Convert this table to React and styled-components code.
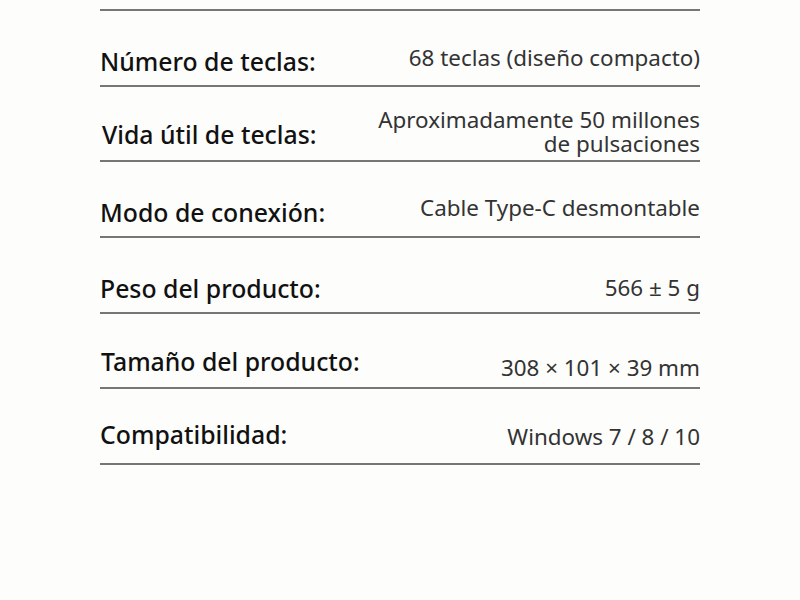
import React from "react";
import styled, { createGlobalStyle } from "styled-components";

const GlobalStyle = createGlobalStyle`
  html, body {
    margin: 0;
    padding: 0;
    background: #fdfdfc;
  }
  body {
    font-family: "Noto Sans", "Open Sans", sans-serif;
  }
`;

// lift: nudges the text up (px) so each row sits like the original sheet
const specs = [
  { label: "Número de teclas:", value: ["68 teclas (diseño compacto)"], labelLift: 0, lift: 3 },
  {
    label: "Vida útil de teclas:",
    value: ["Aproximadamente 50 millones", "de pulsaciones"],
    indent: 2,
    labelLift: 2,
    lift: -8,
  },
  { label: "Modo de conexión:", value: ["Cable Type-C desmontable"], labelLift: 0, lift: 4 },
  { label: "Peso del producto:", value: ["566 ± 5 g"], labelLift: 0, lift: 0 },
  { label: "Tamaño del producto:", value: ["308 × 101 × 39 mm"], indent: 1, labelLift: 2, lift: -5 },
  { label: "Compatibilidad:", value: ["Windows 7 / 8 / 10"], labelLift: 5, lift: 2 },
];

const SpecTable = () => {
  return (
    <Page>
      <GlobalStyle />
      <Table>
        {specs.map((row) => (
          <Row key={row.label}>
            <Label $indent={row.indent || 0} $lift={row.labelLift}>
              {row.label}
            </Label>
            <Value $lift={row.lift}>
              {row.value.map((line) => (
                <span key={line}>{line}</span>
              ))}
            </Value>
          </Row>
        ))}
      </Table>
    </Page>
  );
};

const Page = styled.div`
  width: 800px;
  height: 600px;
  padding-top: 9px;
  box-sizing: border-box;
  background: #fdfdfc;
`;

const Table = styled.div`
  width: 600px;
  margin: 0 auto;
  border-top: 2px solid #767676;
`;

const Row = styled.div`
  height: 73.7px;
  display: flex;
  justify-content: space-between;
  align-items: flex-end;
  border-bottom: 2px solid #767676;
`;

const Label = styled.div`
  padding-left: ${(p) => p.$indent}px;
  padding-bottom: ${(p) => 8 + p.$lift}px;
  font-size: 24.8px;
  font-weight: 500;
  line-height: 31px;
  color: #111;
  white-space: nowrap;
`;

const Value = styled.div`
  display: flex;
  flex-direction: column;
  align-items: flex-end;
  padding-bottom: ${(p) => 12 + p.$lift}px;
  font-size: 22.4px;
  line-height: 24px;
  color: #333;
  text-align: right;
  white-space: nowrap;
`;

export default SpecTable;
